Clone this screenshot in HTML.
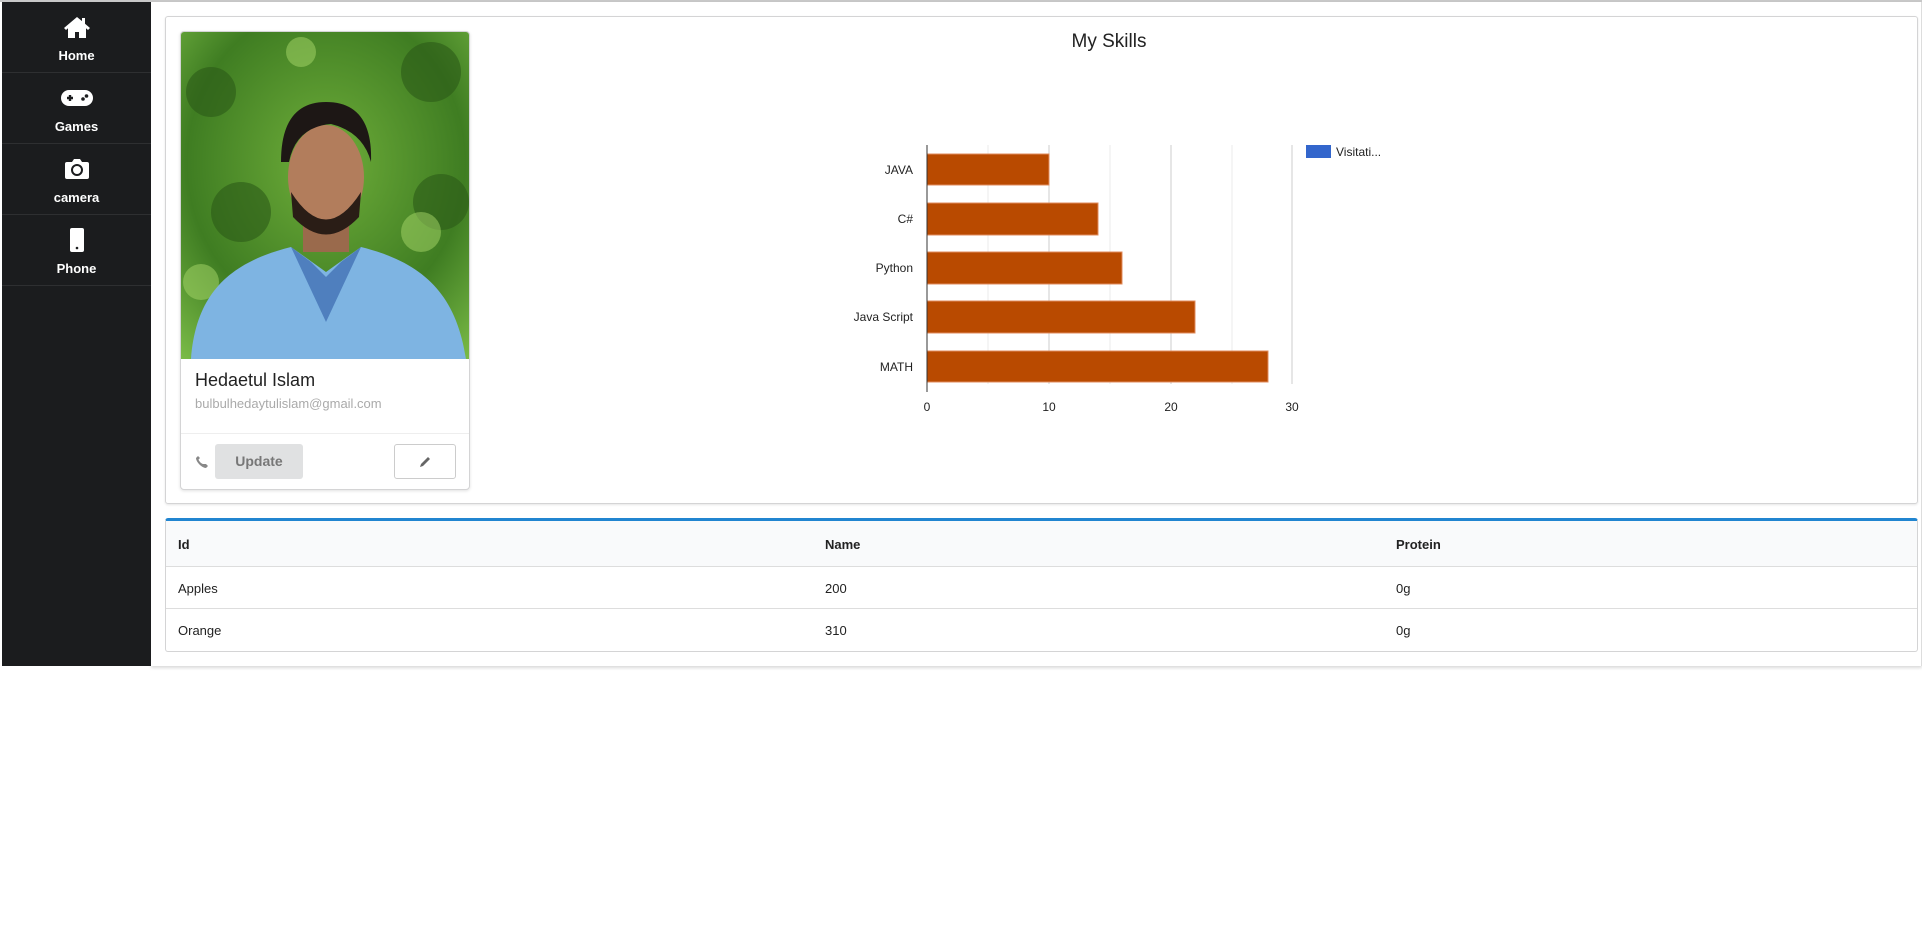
<!DOCTYPE html>
<html><head><meta charset="utf-8"><style>
*{box-sizing:border-box;margin:0;padding:0}
body{width:1922px;height:938px;background:#fff;font-family:"Liberation Sans",sans-serif;position:relative;overflow:hidden}
.topline{position:absolute;left:0;top:0;width:1922px;height:2px;background:#c8c8c8}
.side{position:absolute;left:2px;top:2px;width:149px;height:664px;background:#1b1c1e}
.item{height:71px;border-bottom:1px solid #2e2f31;color:#fff;text-align:center;font-size:13px;font-weight:bold;position:relative}
.item svg{position:absolute;left:50%;transform:translateX(-50%);fill:#fff}
.item span{position:absolute;left:0;right:0;top:46px}
.wrap{position:absolute;left:151px;top:2px;width:1771px;height:664px;border-right:1px solid #ddd;box-shadow:0 2px 3px rgba(0,0,0,.15)}
.main{position:absolute;left:165px;top:16px;width:1753px;height:488px;border:1px solid #d4d4d5;border-radius:3px;box-shadow:0 1px 2px rgba(0,0,0,.1)}
.pcard{position:absolute;left:180px;top:31px;width:290px;height:459px;border:1px solid #d4d4d5;border-radius:4px;box-shadow:0 1px 3px rgba(0,0,0,.12);overflow:hidden;background:#fff}
.name{position:absolute;left:14px;top:338px;font-size:18px;color:#222}
.email{position:absolute;left:14px;top:364px;font-size:13px;color:#aaa}
.div{position:absolute;left:0;right:0;top:401px;border-top:1px solid #eee}
.upd{position:absolute;left:34px;top:412px;width:88px;height:35px;background:#e0e1e2;border-radius:3px;color:#777;font-weight:bold;font-size:14px;text-align:center;line-height:35px}
.edit{position:absolute;left:213px;top:412px;width:62px;height:35px;border:1px solid #ccc;border-radius:3px}
.title{position:absolute;left:1009px;width:200px;text-align:center;top:31px;font-size:19px;color:#222}
.tbl{position:absolute;left:165px;top:518px;width:1753px;height:134px;border:1px solid #d4d4d5;border-top:3px solid #2185d0;border-radius:3px;font-size:13px;color:#222}
.row{position:absolute;left:0;right:0;height:42px;border-bottom:1px solid #ddd}
.row div{position:absolute;top:14px}
</style></head><body>
<div class="topline"></div>
<div class="wrap"></div>
<div class="side">
 <div class="item"><svg width="28" height="24" viewBox="0 0 28 24" style="top:13px"><path d="M14 2L1 13l2 2 2-1.7V23h7v-6h4v6h7v-9.7L25 15l2-2-5-4.3V3h-3v3.1z"/></svg><span>Home</span></div>
 <div class="item"><svg width="32" height="18" viewBox="0 0 32 18" style="top:16px"><path d="M8 1h16a7.5 7.5 0 010 16H8A7.5 7.5 0 018 1z"/><path d="M6 9h6M9 6v6" stroke="#1b1c1e" stroke-width="2.4"/><circle cx="22" cy="10" r="1.8" fill="#1b1c1e"/><circle cx="25.5" cy="7" r="1.8" fill="#1b1c1e"/></svg><span>Games</span></div>
 <div class="item"><svg width="26" height="22" viewBox="0 0 26 22" style="top:14px"><path d="M3 4h5l2-3h6l2 3h5a2 2 0 012 2v13a2 2 0 01-2 2H3a2 2 0 01-2-2V6a2 2 0 012-2z"/><circle cx="13" cy="12" r="5" fill="none" stroke="#1b1c1e" stroke-width="2"/></svg><span>camera</span></div>
 <div class="item"><svg width="16" height="24" viewBox="0 0 16 24" style="top:13px"><rect x="1" y="0" width="14" height="24" rx="2"/><circle cx="8" cy="20" r="1.3" fill="#1b1c1e"/></svg><span>Phone</span></div>
</div>
<div class="main"></div>
<div class="pcard">
 <svg width="290" height="327" viewBox="0 0 290 327" style="position:absolute;left:0;top:0">
  <defs><radialGradient id="g" cx=".5" cy=".4" r=".8"><stop offset="0" stop-color="#6fae3a"/><stop offset=".6" stop-color="#3f7d22"/><stop offset="1" stop-color="#7fc04a"/></radialGradient></defs>
  <rect width="290" height="327" fill="url(#g)"/>
  <g fill="#2c5a17" opacity=".6"><circle cx="30" cy="60" r="25"/><circle cx="250" cy="40" r="30"/><circle cx="60" cy="180" r="30"/><circle cx="260" cy="170" r="28"/></g>
  <g fill="#a8d86a" opacity=".5"><circle cx="240" cy="200" r="20"/><circle cx="20" cy="250" r="18"/><circle cx="120" cy="20" r="15"/></g>
  <path d="M10 327 C15 260 50 230 110 215 L145 240 L180 215 C240 230 275 260 285 327z" fill="#7eb4e2"/>
  <path d="M110 215 L145 290 L180 215 L160 230 L145 245 L130 230z" fill="#4f7fbe"/>
  <rect x="122" y="170" width="46" height="50" fill="#9a6a4c"/>
  <ellipse cx="145" cy="145" rx="38" ry="52" fill="#b27d5c"/>
  <path d="M110 160 Q145 215 180 160 L178 185 Q145 220 112 185z" fill="#2a1d16"/>
  <path d="M100 130 Q100 70 145 70 Q192 70 190 130 Q182 100 150 92 Q115 95 108 130z" fill="#1d1715"/>
 </svg>
 <div class="name">Hedaetul Islam</div>
 <div class="email">bulbulhedaytulislam@gmail.com</div>
 <div class="div"></div>
 <svg width="14" height="14" viewBox="0 0 14 14" style="position:absolute;left:14px;top:423px"><path d="M11 9l2 2-2 2C7 13 1 7 1 3l2-2 2 2-1.5 1.5c.7 2 2.7 4 4.5 4.5z" fill="#888"/></svg>
 <div class="upd">Update</div>
 <div class="edit"><svg width="14" height="14" viewBox="0 0 14 14" style="position:absolute;left:23px;top:10px"><path d="M2 12l1-3 7-7 2 2-7 7z" fill="#666"/></svg></div>
</div>
<div class="title">My Skills</div>
<svg width="1922" height="938" style="position:absolute;left:0;top:0" font-family="Liberation Sans, sans-serif" font-size="12" fill="#222">
 <g stroke="#ebebeb"><line x1="988" y1="145" x2="988" y2="384"/><line x1="1110" y1="145" x2="1110" y2="384"/><line x1="1232" y1="145" x2="1232" y2="384"/></g>
 <g stroke="#ccc"><line x1="1049" y1="145" x2="1049" y2="384"/><line x1="1171" y1="145" x2="1171" y2="384"/><line x1="1292" y1="145" x2="1292" y2="384"/></g>
 <g fill="#b94a00" stroke="#e08b5c" stroke-width="1">
  <rect x="927" y="154" width="122" height="31"/>
  <rect x="927" y="203" width="171" height="32"/>
  <rect x="927" y="252" width="195" height="32"/>
  <rect x="927" y="301" width="268" height="32"/>
  <rect x="927" y="351" width="341" height="31"/>
 </g>
 <line x1="927" y1="145" x2="927" y2="392" stroke="#333"/>
 <g text-anchor="end"><text x="913" y="174">JAVA</text><text x="913" y="223">C#</text><text x="913" y="272">Python</text><text x="913" y="321">Java Script</text><text x="913" y="371">MATH</text></g>
 <g text-anchor="middle"><text x="927" y="411">0</text><text x="1049" y="411">10</text><text x="1171" y="411">20</text><text x="1292" y="411">30</text></g>
 <rect x="1306" y="145" width="25" height="13" fill="#3366cc"/>
 <text x="1336" y="156">Visitati...</text>
</svg>
<div class="tbl">
 <div class="row" style="top:0;height:46px;background:#f9fafb"><div style="left:12px;top:16px;font-weight:bold">Id</div><div style="left:659px;top:16px;font-weight:bold">Name</div><div style="left:1230px;top:16px;font-weight:bold">Protein</div></div>
 <div class="row" style="top:46px"><div style="left:12px">Apples</div><div style="left:659px">200</div><div style="left:1230px">0g</div></div>
 <div class="row" style="top:88px;border-bottom:none"><div style="left:12px">Orange</div><div style="left:659px">310</div><div style="left:1230px">0g</div></div>
</div>
</body></html>
